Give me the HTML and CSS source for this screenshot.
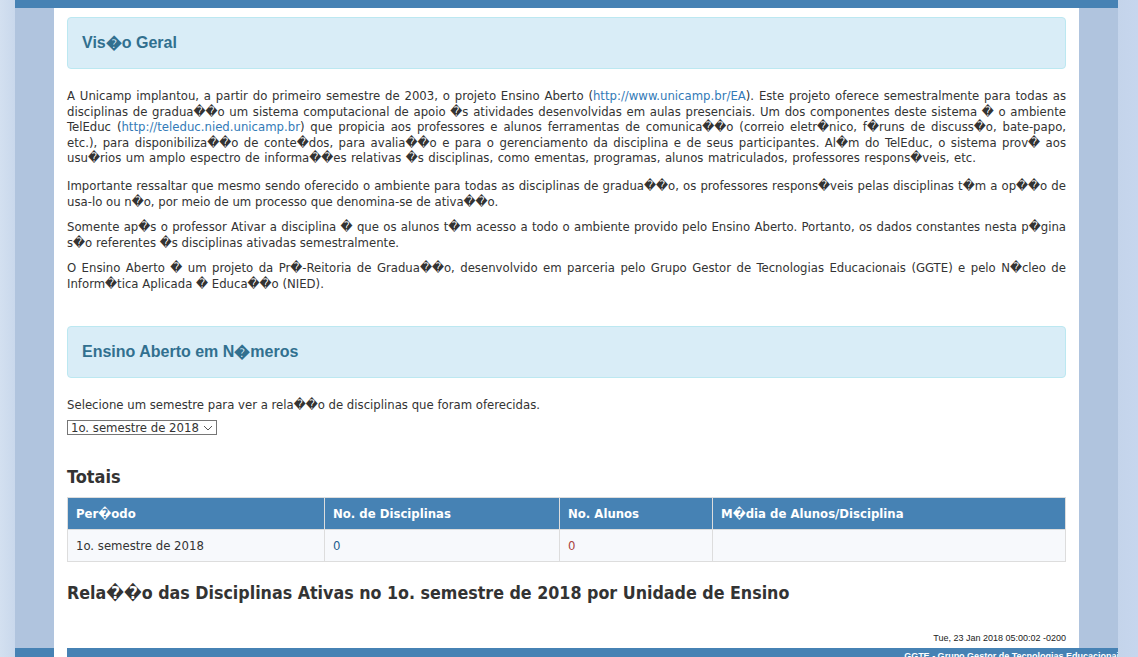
FILE: index.html
```html
<!DOCTYPE html>
<html lang="pt">
<head>
<meta charset="utf-8">
<title>Ensino Aberto</title>
<link rel="stylesheet" href="styles.css">
</head>
<body>
<div class="wrap">
  <div class="page">
    <div class="panel"><h2 class="panel-title">Vis�o Geral</h2></div>
    <p class="intro">A Unicamp implantou, a partir do primeiro semestre de 2003, o projeto Ensino Aberto (<a href="#">http://www.unicamp.br/EA</a>). Este projeto oferece semestralmente para todas as disciplinas de gradua��o um sistema computacional de apoio �s atividades desenvolvidas em aulas presenciais. Um dos componentes deste sistema � o ambiente TelEduc (<a href="#">http://teleduc.nied.unicamp.br</a>) que propicia aos professores e alunos ferramentas de comunica��o (correio eletr�nico, f�runs de discuss�o, bate-papo, etc.), para disponibiliza��o de conte�dos, para avalia��o e para o gerenciamento da disciplina e de seus participantes. Al�m do TelEduc, o sistema prov� aos usu�rios um amplo espectro de informa��es relativas �s disciplinas, como ementas, programas, alunos matriculados, professores respons�veis, etc.</p>
    <p>Importante ressaltar que mesmo sendo oferecido o ambiente para todas as disciplinas de gradua��o, os professores respons�veis pelas disciplinas t�m a op��o de usa-lo ou n�o, por meio de um processo que denomina-se de ativa��o.</p>
    <p>Somente ap�s o professor Ativar a disciplina � que os alunos t�m acesso a todo o ambiente provido pelo Ensino Aberto. Portanto, os dados constantes nesta p�gina s�o referentes �s disciplinas ativadas semestralmente.</p>
    <p>O Ensino Aberto � um projeto da Pr�-Reitoria de Gradua��o, desenvolvido em parceria pelo Grupo Gestor de Tecnologias Educacionais (GGTE) e pelo N�cleo de Inform�tica Aplicada � Educa��o (NIED).</p>

    <div class="panel panel-second"><h2 class="panel-title">Ensino Aberto em N�meros</h2></div>
    <p class="select-label">Selecione um semestre para ver a rela��o de disciplinas que foram oferecidas.</p>
    <select class="semester">
      <option>1o. semestre de 2018</option>
    </select>

    <h3 class="section-title totals-title">Totais</h3>
    <table class="totals">
      <thead>
        <tr>
          <th class="c1">Per�odo</th>
          <th class="c2">No. de Disciplinas</th>
          <th class="c3">No. Alunos</th>
          <th class="c4">M�dia de Alunos/Disciplina</th>
        </tr>
      </thead>
      <tbody>
        <tr>
          <td>1o. semestre de 2018</td>
          <td class="num-blue">0</td>
          <td class="num-red">0</td>
          <td></td>
        </tr>
      </tbody>
    </table>

    <h3 class="section-title relacao-title">Rela��o das Disciplinas Ativas no 1o. semestre de 2018 por Unidade de Ensino</h3>

    <div class="timestamp">Tue, 23 Jan 2018 05:00:02 -0200</div>
  </div>
  <div class="footer-row">
    <div class="foot-left"></div>
    <div class="foot-gap"></div>
    <div class="foot-bar"><span class="foot-text">GGTE - Grupo Gestor de Tecnologias Educacionais</span></div>
  </div>
</div>
</body>
</html>
```

FILE: styles.css
```css
html, body {
  margin: 0;
  padding: 0;
}
body {
  background: linear-gradient(90deg, #d3e0f0 0%, #c4d4ea 2%, #c4d4ea 98%, #c6d6ee 100%);
  font-family: "DejaVu Sans Condensed", "DejaVu Sans", sans-serif;
  font-size: 13px;
  color: #333;
  height: 657px;
  overflow: hidden;
}
.wrap {
  margin-left: 15px;
  width: 1103px;
  background: #b0c4de;
  border-top: 8px solid #4682b4;
  display: flex;
  flex-direction: column;
}
.page {
  flex-shrink: 0;
  margin-left: 39px;
  width: 999px;
  padding: 9px 13px 0;
  background: #fff;
  height: 631px;
}
.panel {
  background: #d9edf7;
  border: 1px solid #bce8f1;
  border-radius: 4px;
  height: 50px;
  display: flex;
  align-items: center;
  padding: 0 14px;
  margin-bottom: 19px;
}
.panel-title {
  margin: 0;
  font-family: "Liberation Sans", Arial, sans-serif;
  font-size: 16px;
  font-weight: bold;
  color: #31708f;
  position: relative;
  top: -1px;
}
.panel-second {
  margin-top: 34px;
  margin-bottom: 19px;
}
p {
  margin: 0 0 10px;
  line-height: 15.6px;
  text-align: justify;
}
.intro {
  word-spacing: 0.8px;
  margin-bottom: 12px;
}
a {
  color: #337ab7;
  text-decoration: none;
}
.select-label {
  margin-bottom: 8px;
}
.semester {
  appearance: none;
  -webkit-appearance: none;
  font-family: "DejaVu Sans Condensed", "DejaVu Sans", sans-serif;
  font-size: 13px;
  color: #333;
  background: #fff url("data:image/svg+xml,%3Csvg xmlns='http://www.w3.org/2000/svg' width='10' height='6'%3E%3Cpath d='M1 1l4 4 4-4' fill='none' stroke='%23555' stroke-width='1'/%3E%3C/svg%3E") no-repeat right 3px center;
  border: 1px solid #767676;
  border-radius: 0;
  height: 15px;
  width: 150px;
  padding: 0 14px 0 3px;
  line-height: 13px;
  display: block;
  margin: 0;
}
.section-title {
  margin: 0;
  font-size: 18px;
  font-weight: bold;
  color: #333;
  line-height: 22px;
}
.relacao-title {
  font-size: 17.7px;
}
.totals-title {
  margin-top: 31px;
  margin-bottom: 9px;
}
.totals {
  width: 999px;
  border-collapse: collapse;
  margin-bottom: 20px;
}
.totals th, .totals td {
  border: 1px solid #ddd;
  text-align: left;
  padding: 0 8px;
  height: 31px;
  font-size: 13px;
}
.totals th {
  background: #4682b4;
  color: #fff;
  font-weight: bold;
}
.totals td {
  background: #f7f9fc;
}
.c1 { width: 240px; }
.c2 { width: 218px; }
.c3 { width: 136px; }
.num-blue { color: #1d5f8f; }
.num-red { color: #a94442; }
.timestamp {
  font-family: "Liberation Sans", Arial, sans-serif;
  font-size: 9px;
  line-height: 11px;
  text-align: right;
  color: #222;
  margin-top: 29px;
}
.footer-row {
  flex-shrink: 0;
  display: flex;
  height: 16px;
}
.foot-left {
  width: 39px;
  background: #4682b4;
}
.foot-gap {
  width: 13px;
  background: #fff;
}
.foot-bar {
  flex: 1;
  background: #4682b4;
  display: flex;
  justify-content: flex-end;
  overflow: hidden;
}
.foot-text {
  flex-shrink: 0;
  margin-right: -6px;
  color: #fff;
  font-family: "Liberation Sans", Arial, sans-serif;
  font-size: 9px;
  font-weight: bold;
  line-height: 16px;
  white-space: nowrap;
}
```
